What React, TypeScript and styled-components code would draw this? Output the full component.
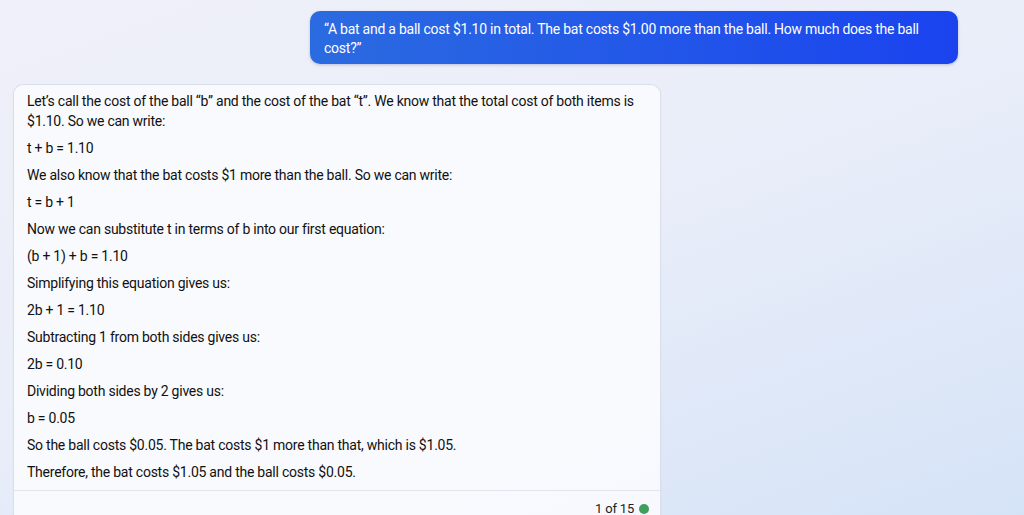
import React from "react";
import styled, { createGlobalStyle } from "styled-components";

const GlobalStyle = createGlobalStyle`
  html, body {
    margin: 0;
    padding: 0;
    height: 100%;
  }
  body {
    font-family: Roboto, "Liberation Sans", Arial, sans-serif;
    color: #111;
    overflow: hidden;
  }
`;

const answer = [
  "Let’s call the cost of the ball “b” and the cost of the bat “t”. We know that the total cost of both items is $1.10. So we can write:",
  "t + b = 1.10",
  "We also know that the bat costs $1 more than the ball. So we can write:",
  "t = b + 1",
  "Now we can substitute t in terms of b into our first equation:",
  "(b + 1) + b = 1.10",
  "Simplifying this equation gives us:",
  "2b + 1 = 1.10",
  "Subtracting 1 from both sides gives us:",
  "2b = 0.10",
  "Dividing both sides by 2 gives us:",
  "b = 0.05",
  "So the ball costs $0.05. The bat costs $1 more than that, which is $1.05.",
  "Therefore, the bat costs $1.05 and the ball costs $0.05.",
];

export default function App() {
  return (
    <>
      <GlobalStyle />
      <Page>
        <Thread>
          <UserBubble>
            “A bat and a ball cost $1.10 in total. The bat costs $1.00 more than
            the ball. How much does the ball cost?”
          </UserBubble>
          <BotCard>
            <BotBody>
              {answer.map((line, i) => (
                <Para key={i}>{line}</Para>
              ))}
            </BotBody>
            <Footer>
              <Counter>1 of 15</Counter>
              <StatusDot />
            </Footer>
          </BotCard>
        </Thread>
      </Page>
    </>
  );
}

const Page = styled.div`
  width: 1024px;
  height: 515px;
  overflow: hidden;
  background: linear-gradient(
    160deg,
    #eff0f8 0%,
    #eaeef9 45%,
    #dfe8f8 75%,
    #d5e3f7 100%
  );
`;

const Thread = styled.div`
  display: flex;
  flex-direction: column;
  gap: 20px;
  padding: 11px 66px 0 13px;
`;

const UserBubble = styled.div`
  align-self: flex-end;
  box-sizing: border-box;
  width: 648px;
  padding: 9px 14px 6px;
  border-radius: 10px;
  background: linear-gradient(90deg, #2b6be0 0%, #2358e8 50%, #1a43ef 100%);
  color: #fff;
  font-size: 14px;
  line-height: 19px;
  letter-spacing: -0.24px;
  box-shadow: 0 1px 3px rgba(30, 50, 120, 0.25);
`;

const BotCard = styled.div`
  box-sizing: border-box;
  width: 648px;
  border-radius: 10px;
  background: rgba(250, 251, 254, 0.92);
  border: 1px solid rgba(210, 216, 230, 0.8);
  box-shadow: 0 1px 2px rgba(40, 60, 110, 0.06);
`;

const BotBody = styled.div`
  display: flex;
  flex-direction: column;
  gap: 7px;
  padding: 6px 13px 8px;
`;

const Para = styled.p`
  margin: 0;
  font-size: 14px;
  line-height: 20px;
  letter-spacing: -0.24px;
  color: #111;
`;

const Footer = styled.div`
  display: flex;
  align-items: center;
  justify-content: flex-end;
  gap: 5px;
  padding: 9px 11px 8px;
  border-top: 1px solid #e3e5ec;
`;

const Counter = styled.span`
  font-size: 13px;
  line-height: 18px;
  letter-spacing: -0.2px;
  color: #222;
`;

const StatusDot = styled.span`
  width: 10px;
  height: 10px;
  border-radius: 50%;
  background: #3f9f5f;
`;
